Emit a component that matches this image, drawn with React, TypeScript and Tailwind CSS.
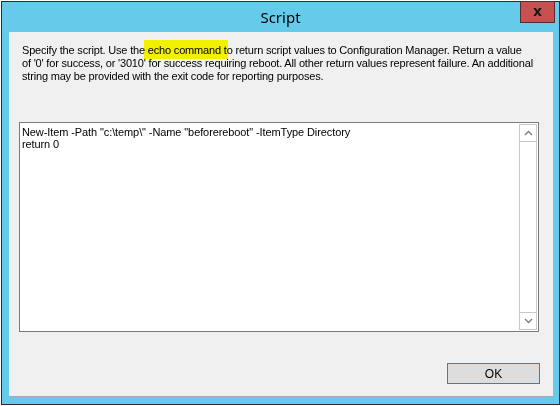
export default function App() {
  return (
    <div className="w-[560px] h-[406px] bg-white overflow-hidden" style={{ fontFamily: '"Liberation Sans", Arial, sans-serif' }}>
      {/* Window */}
      <div className="relative ml-[1px] mt-[1px] w-[559px] h-[404px] border border-[#2b2b2b] bg-[#66cbea] flex flex-col">
        {/* Title bar */}
        <div className="h-[30px] flex items-center justify-center">
          <span className="text-[15px] text-black pt-[1px]" style={{ fontFamily: '"Noto Sans", "Open Sans", sans-serif' }}>
            Script
          </span>
        </div>
        <button className="absolute -top-[1px] right-[4px] w-[35px] h-[22px] bg-[#c75050] border border-[#5a2b2b] flex items-center justify-center">
          <span className="text-[14px] font-bold text-[#1a1a1a] leading-none -mt-[2px]" style={{ fontFamily: '"DejaVu Sans", sans-serif' }}>x</span>
        </button>

        {/* Content */}
        <div className="ml-[7px] mr-[6px] h-[365px] bg-[#f0f0f0] border-b border-[#a9a9a9] flex flex-col">
          <p className="mt-[12px] ml-[13px] text-[11px] leading-[13px] tracking-[-0.18px] text-black whitespace-nowrap">
            Specify the script. Use the{' '}
            <span className="relative">
              <span className="absolute -left-[4px] -right-[7px] -top-[4px] -bottom-[3px] bg-[#ffff00] mix-blend-multiply" />
              <span className="relative">echo command</span>
            </span>{' '}
            to return script values to Configuration Manager. Return a value
            <br />
            of '0' for success, or '3010' for success requiring reboot. All other return values represent failure. An additional
            <br />
            string may be provided with the exit code for reporting purposes.
          </p>

          {/* Script box */}
          <div className="mt-[39px] ml-[10px] w-[520px] h-[210px] border border-[#7a7a7a] bg-white flex">
            <div className="flex-1 pl-[2px] pt-[3px] text-[11px] leading-[12px] tracking-[-0.1px] text-black">
              <div>New-Item -Path "c:\temp\" -Name "beforereboot" -ItemType Directory</div>
              <div>return 0</div>
            </div>
            <div className="w-[18px] my-[1px] mr-[1px] border border-[#c8c8c8] flex flex-col justify-between bg-white">
              <div className="h-[17px] border-b border-[#c8c8c8] flex items-center justify-center">
                <svg width="9" height="6" viewBox="0 0 9 6">
                  <path d="M1 5 L4.5 1.5 L8 5" fill="none" stroke="#7a7a7a" strokeWidth="1.3" />
                </svg>
              </div>
              <div className="h-[17px] border-t border-[#c8c8c8] flex items-center justify-center">
                <svg width="9" height="6" viewBox="0 0 9 6">
                  <path d="M1 1 L4.5 4.5 L8 1" fill="none" stroke="#7a7a7a" strokeWidth="1.3" />
                </svg>
              </div>
            </div>
          </div>

          {/* Buttons */}
          <div className="mt-[31px] ml-[438px]">
            <button className="w-[93px] h-[21px] bg-[#dddddd] border border-[#3c7fb1] text-[12px] text-black flex items-center justify-center">
              OK
            </button>
          </div>
        </div>
      </div>
    </div>
  )
}
